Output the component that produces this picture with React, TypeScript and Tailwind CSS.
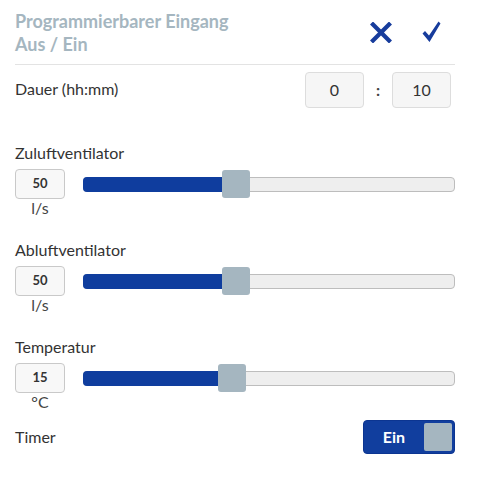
import React from 'react';

interface SliderRow {
  id: string;
  label: string;
  value: number;
  unit: string;
  offset: number;
}

const rows: SliderRow[] = [
  { id: 'zuluft', label: 'Zuluftventilator', value: 50, unit: 'l/s', offset: 138 },
  { id: 'abluft', label: 'Abluftventilator', value: 50, unit: 'l/s', offset: 138 },
  { id: 'temp', label: 'Temperatur', value: 15, unit: '°C', offset: 134 },
];

function CloseIcon() {
  return (
    <svg width="22" height="21" viewBox="0 0 22 21">
      <path d="M3 2.5 L19 18.5 M19 2.5 L3 18.5" stroke="#173c9c" strokeWidth="4.2" strokeLinecap="square" />
    </svg>
  );
}

function CheckIcon() {
  return (
    <svg width="19" height="22" viewBox="0 0 19 22">
      <path d="M0.5 12.5 L3 10 L7 14.5 L16.5 0.5 L18.5 2.5 L7.5 21 Z" fill="#173c9c" />
    </svg>
  );
}

function Slider({ row }: { row: SliderRow }) {
  return (
    <div className="mb-[23px]">
      <div className="text-[16px] leading-5 text-[#333]">{row.label}</div>
      <div className="mt-[6px] flex">
        <div className="flex w-[50px] flex-col items-center">
          <div className="flex h-[30px] w-[50px] items-center justify-center rounded-sm border border-[#c9c9c9] bg-[#f8f8f8] text-[13px] font-bold text-[#333]">
            {row.value}
          </div>
          <div className="text-[16px] leading-[18px] text-[#444]">{row.unit}</div>
        </div>
        <div className="ml-[18px] flex h-[30px] flex-1 items-center">
          <div className="relative h-[15px] w-full rounded-sm border border-[#bdbdbd] bg-[#eeeeee]">
            <div
              className="absolute top-[-1px] bottom-[-1px] left-[-1px] rounded-l-sm bg-[#0f3d9e]"
              style={{ width: row.offset + 2 }}
            />
            <div
              className="absolute top-[-8px] h-[28px] w-[28px] rounded-[3px] bg-[#a5b6c0]"
              style={{ left: row.offset }}
            />
          </div>
        </div>
      </div>
    </div>
  );
}

export default function App() {
  return (
    <div className="w-[470px] bg-white px-[15px] font-['Lato','Noto_Sans',sans-serif]">
      <div className="flex items-start justify-between border-b border-[#e3e3e3] pt-[10px] pb-[8px]">
        <div className="text-[18px] font-bold leading-[23px] text-[#a5b6c0]">
          <div>Programmierbarer Eingang</div>
          <div>Aus / Ein</div>
        </div>
        <div className="mt-[11px] mr-[14px] flex items-center gap-[30px]">
          <CloseIcon />
          <CheckIcon />
        </div>
      </div>

      <div className="flex items-center justify-between pt-[7px]">
        <div className="-mt-[2px] text-[16px] text-[#333]">Dauer (hh:mm)</div>
        <div className="mr-[4px] flex items-center">
          <div className="flex h-[36px] w-[59px] items-center justify-center rounded-sm border border-[#dddddd] bg-[#f6f6f6] text-[16px] text-[#333]">
            0
          </div>
          <div className="w-[28px] text-center text-[16px] font-bold text-[#444]">:</div>
          <div className="flex h-[36px] w-[59px] items-center justify-center rounded-sm border border-[#dddddd] bg-[#f6f6f6] text-[16px] text-[#333]">
            10
          </div>
        </div>
      </div>

      <div className="mt-[35px]">
        {rows.map(row => (
          <Slider key={row.id} row={row} />
        ))}
      </div>

      <div className="-mt-[14px] flex items-center justify-between">
        <div className="text-[16px] text-[#333]">Timer</div>
        <div className="flex h-[34px] w-[92px] items-center rounded-sm border border-[#0c3591] bg-[#113e9e] pr-[2px]">
          <span className="flex-1 text-center text-[16px] font-bold text-white">Ein</span>
          <div className="h-[28px] w-[28px] rounded-[2px] bg-[#a5b6c0]" />
        </div>
      </div>
    </div>
  );
}
